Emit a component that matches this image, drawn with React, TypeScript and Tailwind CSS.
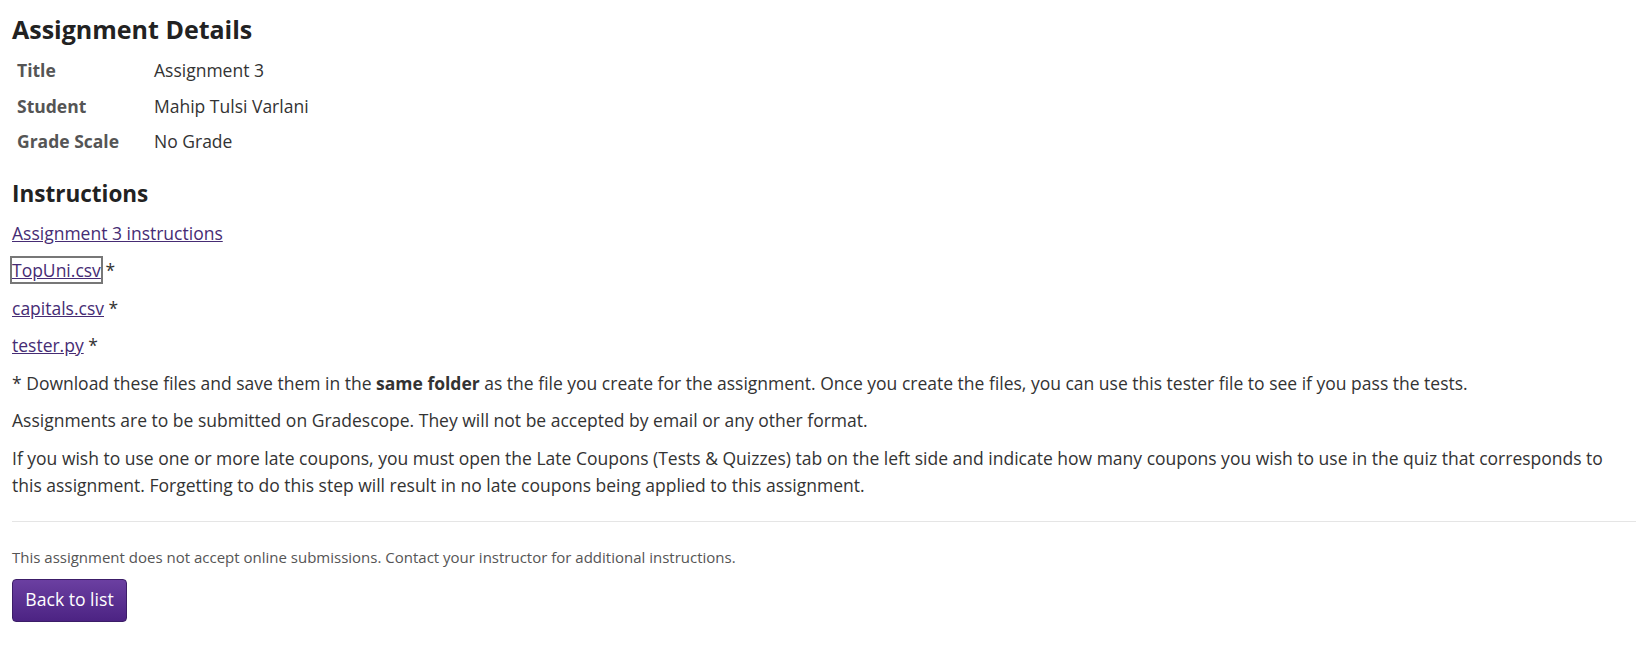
export default function App() {
  const rows = [
    ['Title', 'Assignment 3'],
    ['Student', 'Mahip Tulsi Varlani'],
    ['Grade Scale', 'No Grade'],
  ];

  return (
    <div className="min-h-screen bg-white pl-[12px] pt-[14px] text-[17.5px] leading-[27.5px] text-[#333333]" style={{ fontFamily: '"Open Sans", sans-serif' }}>
      <h2 className="text-[25px] font-bold leading-[1.2] text-[#222222]">Assignment Details</h2>
      <table className="mt-[9px] border-collapse">
        <tbody>
          {rows.map(([label, value]) => (
            <tr key={label}>
              <th className="w-[137px] py-[4px] pl-[5px] text-left align-top font-bold text-[#555555]">{label}</th>
              <td className="py-[4px] pl-[5px]">{value}</td>
            </tr>
          ))}
        </tbody>
      </table>

      <h3 className="mt-[20px] text-[22.5px] font-bold leading-[1.2] text-[#222222]">Instructions</h3>
      <div className="mt-[13px] flex flex-col gap-[10px]">
        <p><a href="#" className="text-[#462c74] underline">Assignment 3 instructions</a></p>
        <p><a href="#" className="text-[#462c74] underline outline-2 outline-offset-0 outline-[#777777] outline">TopUni.csv</a> *</p>
        <p><a href="#" className="text-[#462c74] underline">capitals.csv</a> *</p>
        <p><a href="#" className="text-[#462c74] underline">tester.py</a> *</p>
        <p>* Download these files and save them in the <strong>same folder</strong> as the file you create for the assignment. Once you create the files, you can use this tester file to see if you pass the tests.</p>
        <p>Assignments are to be submitted on Gradescope. They will not be accepted by email or any other format.</p>
        <p>If you wish to use one or more late coupons, you must open the Late Coupons (Tests &amp; Quizzes) tab on the left side and indicate how many coupons you wish to use in the quiz that corresponds to this assignment. Forgetting to do this step will result in no late coupons being applied to this assignment.</p>
      </div>

      <hr className="mt-[21px] border-t border-[#e5e5e5]" />

      <p className="mt-[24px] text-[15px] leading-[22px] text-[#555555]">This assignment does not accept online submissions. Contact your instructor for additional instructions.</p>
      <div className="mt-[11px]">
        <button className="h-[43px] w-[115px] rounded-[4px] border border-[#3c1d68] bg-gradient-to-b from-[#6b3fa1] to-[#4c2383] text-[17.6px] text-white">Back to list</button>
      </div>
    </div>
  );
}
